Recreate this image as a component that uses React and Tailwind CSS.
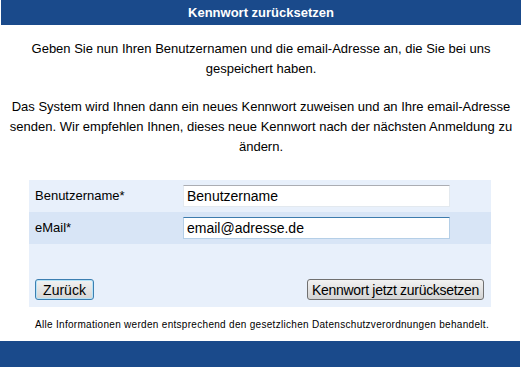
export default function App() {
  return (
    <div className="w-[522px] h-[367px] bg-white flex flex-col text-black" style={{ fontFamily: '"Liberation Sans", Arial, sans-serif' }}>
      <div className="mx-[1px] h-[25px] bg-[#1a4a8b] text-white font-bold text-[13px] flex items-center justify-center">
        Kennwort zurücksetzen
      </div>
      <div className="w-[516px] mx-auto text-center text-[13px] leading-[20px] mt-[14px]">
        <p className="px-[27px]">Geben Sie nun Ihren Benutzernamen und die email-Adresse an, die Sie bei uns gespeichert haben.</p>
        <p className="mt-[18px] px-[2px]">Das System wird Ihnen dann ein neues Kennwort zuweisen und an Ihre email-Adresse senden. Wir empfehlen Ihnen, dieses neue Kennwort nach der nächsten Anmeldung zu ändern.</p>
      </div>
      <div className="ml-[29px] w-[462px] mt-[23px] bg-[#e8f0fb] text-[13px]">
        <div className="h-[32px] flex items-center pl-[6px]">
          <div className="w-[148px]">Benutzername*</div>
          <input
            readOnly
            value="Benutzername"
            className="w-[267px] h-[22px] bg-white border border-[#e3e9ef] border-t-[#abadb3] px-[3px] text-[14px] outline-none"
            style={{ fontFamily: '"Liberation Sans", Arial, sans-serif' }}
          />
        </div>
        <div className="h-[32px] flex items-center pl-[6px] bg-[#d8e5f6]">
          <div className="w-[148px]">eMail*</div>
          <input
            readOnly
            value="email@adresse.de"
            className="w-[267px] h-[22px] bg-white border border-[#b5cfe7] border-t-[#3d7bad] px-[3px] text-[14px] outline-none"
            style={{ fontFamily: '"Liberation Sans", Arial, sans-serif' }}
          />
        </div>
        <div className="flex items-center justify-between pl-[6px] pr-[7px] pt-[35px] pb-[7px]">
          <button className="w-[59px] h-[21px] rounded-[3px] border border-[#3c7fb1] bg-gradient-to-b from-[#f2f2f2] to-[#d6d6d6] text-[14px] leading-none text-black flex items-center justify-center shadow-[inset_0_0_0_1px_#b6e3f8]">
            Zurück
          </button>
          <button className="w-[177px] h-[21px] rounded-[3px] border border-[#707070] bg-gradient-to-b from-[#f2f2f2] to-[#d4d4d4] text-[14px] leading-none text-black flex items-center justify-center tracking-[-0.3px]">
            Kennwort jetzt zurücksetzen
          </button>
        </div>
      </div>
      <div className="text-center text-[10px] leading-[12px] mt-[12px] pl-[2px] tracking-[0.3px]">
        Alle Informationen werden entsprechend den gesetzlichen Datenschutzverordnungen behandelt.
      </div>
      <div className="mt-auto mr-[2px] h-[26px] bg-[#1a4a8b]"></div>
    </div>
  );
}
